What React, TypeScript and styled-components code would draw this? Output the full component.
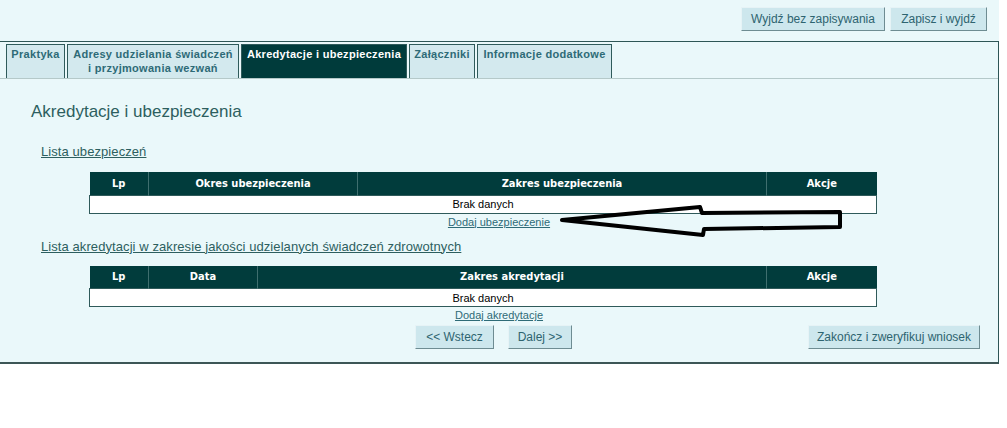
import React from "react";
import styled, { createGlobalStyle } from "styled-components";

const GlobalStyle = createGlobalStyle`
  html, body { margin: 0; padding: 0; background: #ffffff; }
  body { font-family: "Liberation Sans", Arial, sans-serif; }
  * { box-sizing: border-box; }
`;

const Page = styled.div`
  position: relative;
  width: 999px;
  background: #eaf8fa;
`;

const TopBar = styled.div`
  display: flex;
  justify-content: flex-end;
  gap: 5px;
  height: 41px;
  padding: 7px 12px 0 0;
`;

const Button = styled.button<{ $w: number }>`
  width: ${(p) => p.$w}px;
  height: 24px;
  padding: 0;
  font-family: "Liberation Sans", Arial, sans-serif;
  font-size: 12px;
  color: #2e6470;
  background: #cde7ed;
  border: 1px solid;
  border-color: #e6f3f6 #6e8c92 #6e8c92 #e6f3f6;
  cursor: pointer;
`;

const Panel = styled.div`
  width: 999px;
  border-top: 1px solid #2e5656;
  border-right: 1px solid #2e5656;
  border-bottom: 2px solid #3d5656;
  padding-bottom: 13px;
`;

const TabBar = styled.div`
  display: flex;
  gap: 2px;
  height: 37px;
  padding: 2px 0 0 6px;
  border-bottom: 1px solid #b5c9c9;
`;

const Tab = styled.div<{ $active?: boolean; $w: number }>`
  width: ${(p) => p.$w}px;
  padding-top: 2px;
  text-align: center;
  font-size: 11px;
  font-weight: bold;
  letter-spacing: 0.3px;
  line-height: 14px;
  color: ${(p) => (p.$active ? "#ffffff" : "#2e6b77")};
  background: ${(p) => (p.$active ? "#003b3b" : "#d3e9ee")};
  border: 1px solid #2f5b5b;
  border-bottom: none;
`;

const Title = styled.h1`
  margin: 23px 0 0 31px;
  font-size: 17px;
  font-weight: normal;
  line-height: 20px;
  color: #2d5f5f;
`;

const SectionLink = styled.a<{ $top: number }>`
  display: inline-block;
  margin: ${(p) => p.$top}px 0 0 41px;
  font-size: 13px;
  letter-spacing: 0.08px;
  line-height: 16px;
  color: #2d5f5f;
  text-decoration: underline;
`;

const Table = styled.table<{ $top: number }>`
  margin: ${(p) => p.$top}px 0 0 89px;
  width: 787px;
  border-collapse: collapse;
  table-layout: fixed;
`;

const HeadCell = styled.th<{ $w: number }>`
  width: ${(p) => p.$w}px;
  height: 23px;
  padding: 0;
  background: #013c3c;
  color: #ffffff;
  font-family: "DejaVu Sans Condensed", "Liberation Sans", Arial, sans-serif;
  font-stretch: condensed;
  font-size: 11px;
  font-weight: bold;
  text-align: center;
  border-left: 1px solid #3f6f6f;
  &:first-child { border-left: none; }
`;

const EmptyCell = styled.td`
  height: 18px;
  padding: 0;
  background: #ffffff;
  border: 1px solid #2f5a5a;
  font-size: 11px;
  color: #000000;
  text-align: center;
`;

const AddLink = styled.a`
  display: block;
  width: 998px;
  height: 15px;
  padding-top: 1px;
  text-align: center;
  font-size: 11px;
  line-height: 14px;
  color: #2e6b77;
  text-decoration: underline;
`;

const Section = styled.div`
  display: flex;
  flex-direction: column;
  align-items: flex-start;
`;

const BottomBar = styled.div`
  display: flex;
  gap: 14px;
  margin-top: 3px;
  padding: 0 18px 0 415px;
`;

const Spacer = styled.div`
  flex: 1;
`;

const Arrow = styled.svg`
  position: absolute;
  left: 0;
  top: 0;
  pointer-events: none;
`;

const columns1 = [
  { label: "Lp", w: 59 },
  { label: "Okres ubezpieczenia", w: 209 },
  { label: "Zakres ubezpieczenia", w: 409 },
  { label: "Akcje", w: 110 },
];

const columns2 = [
  { label: "Lp", w: 59 },
  { label: "Data", w: 109 },
  { label: "Zakres akredytacji", w: 509 },
  { label: "Akcje", w: 110 },
];

const tabs = [
  { label: "Praktyka", w: 59 },
  { label: "Adresy udzielania świadczeń\ni przyjmowania wezwań", w: 172 },
  { label: "Akredytacje i ubezpieczenia", w: 166, active: true },
  { label: "Załączniki", w: 66 },
  { label: "Informacje dodatkowe", w: 135 },
];

function DataTable({ cols, top }: { cols: { label: string; w: number }[]; top: number }) {
  return (
    <Table $top={top}>
      <thead>
        <tr>
          {cols.map((c) => (
            <HeadCell key={c.label} $w={c.w}>
              {c.label}
            </HeadCell>
          ))}
        </tr>
      </thead>
      <tbody>
        <tr>
          <EmptyCell colSpan={cols.length}>Brak danych</EmptyCell>
        </tr>
      </tbody>
    </Table>
  );
}

export default function App() {
  return (
    <>
      <GlobalStyle />
      <Page>
        <TopBar>
          <Button $w={144}>Wyjdź bez zapisywania</Button>
          <Button $w={97}>Zapisz i wyjdź</Button>
        </TopBar>
        <Panel>
          <TabBar>
            {tabs.map((t) => (
              <Tab key={t.label} $w={t.w} $active={t.active}>
                {t.label.split("\n").map((line, i) => (
                  <div key={i}>{line}</div>
                ))}
              </Tab>
            ))}
          </TabBar>
          <Title>Akredytacje i ubezpieczenia</Title>
          <Section>
            <SectionLink $top={22}>Lista ubezpieczeń</SectionLink>
            <DataTable cols={columns1} top={12} />
            <AddLink>Dodaj ubezpieczenie</AddLink>
            <SectionLink $top={10}>
              Lista akredytacji w zakresie jakości udzielanych świadczeń zdrowotnych
            </SectionLink>
            <DataTable cols={columns2} top={11} />
            <AddLink>Dodaj akredytacje</AddLink>
          </Section>
          <BottomBar>
            <Button $w={79}>&lt;&lt; Wstecz</Button>
            <Button $w={64}>Dalej &gt;&gt;</Button>
            <Spacer />
            <Button $w={172}>Zakończ i zweryfikuj wniosek</Button>
          </BottomBar>
        </Panel>
        <Arrow width="999" height="362" viewBox="0 0 999 362">
          <polygon
            points="562,220 700,207 702,213 840,212 840,227 704,229 703,235"
            fill="none"
            stroke="#000"
            strokeWidth="4"
            strokeLinejoin="round"
          />
        </Arrow>
      </Page>
    </>
  );
}
